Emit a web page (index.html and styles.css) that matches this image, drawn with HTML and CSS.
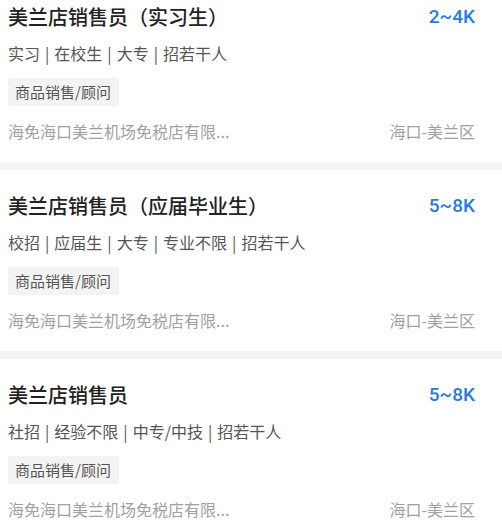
FILE: index.html
```html
<!DOCTYPE html>
<html lang="zh-CN">
<head>
  <meta charset="UTF-8">
  <meta name="viewport" content="width=device-width, initial-scale=1.0">
  <title>职位列表</title>
  <link rel="stylesheet" href="styles.css">
</head>
<body>
  <div class="job-list">
    <div class="job-card">
      <div class="job-head">
        <span class="job-title">美兰店销售员（实习生）</span>
        <span class="job-salary">2~4K</span>
      </div>
      <div class="job-tags">实习<span class="sep">|</span>在校生<span class="sep">|</span>大专<span class="sep">|</span>招若干人</div>
      <span class="job-chip">商品销售/顾问</span>
      <div class="job-foot">
        <span>海免海口美兰机场免税店有限...</span>
        <span>海口-美兰区</span>
      </div>
    </div>

    <div class="job-card">
      <div class="job-head">
        <span class="job-title">美兰店销售员（应届毕业生）</span>
        <span class="job-salary">5~8K</span>
      </div>
      <div class="job-tags">校招<span class="sep">|</span>应届生<span class="sep">|</span>大专<span class="sep">|</span>专业不限<span class="sep">|</span>招若干人</div>
      <span class="job-chip">商品销售/顾问</span>
      <div class="job-foot">
        <span>海免海口美兰机场免税店有限...</span>
        <span>海口-美兰区</span>
      </div>
    </div>

    <div class="job-card">
      <div class="job-head">
        <span class="job-title">美兰店销售员</span>
        <span class="job-salary">5~8K</span>
      </div>
      <div class="job-tags">社招<span class="sep">|</span>经验不限<span class="sep">|</span>中专/中技<span class="sep">|</span>招若干人</div>
      <span class="job-chip">商品销售/顾问</span>
      <div class="job-foot">
        <span>海免海口美兰机场免税店有限...</span>
        <span>海口-美兰区</span>
      </div>
    </div>
  </div>
</body>
</html>
```

FILE: styles.css
```css
/* 全局 */
body {
  margin: 0;
  background-color: #f4f4f6;
  font-family: "Noto Sans CJK SC", "Noto Sans", sans-serif;
}

/* 列表（页面已向下滚动一点） */
.job-list {
  display: flex;
  flex-direction: column;
  gap: 8px;
  margin-top: -19px;
}

/* 职位卡片 */
.job-card {
  background-color: #ffffff;
  padding: 22px 27px 20px 8px;
}

.job-head {
  display: flex;
  justify-content: space-between;
  align-items: center;
}

.job-title {
  font-size: 20px;
  line-height: 28px;
  font-weight: 500;
  color: #222;
}

.job-salary {
  font-family: Roboto, "Liberation Sans", sans-serif;
  font-size: 19px;
  line-height: 28px;
  font-weight: 500;
  color: #2a7be0;
}

.job-tags {
  margin-top: 11px;
  font-size: 16px;
  line-height: 22px;
  color: #555;
}

.job-tags .sep {
  margin: 0 5px;
}

/* 分类标签 */
.job-chip {
  display: inline-block;
  margin-top: 14px;
  padding: 0 8px 0 7px;
  font-size: 15px;
  line-height: 28px;
  color: #555;
  background-color: #f3f3f3;
  border-radius: 3px;
}

.job-foot {
  display: flex;
  justify-content: space-between;
  margin-top: 14px;
  font-size: 16px;
  line-height: 22px;
  color: #a0a0a0;
}
```
